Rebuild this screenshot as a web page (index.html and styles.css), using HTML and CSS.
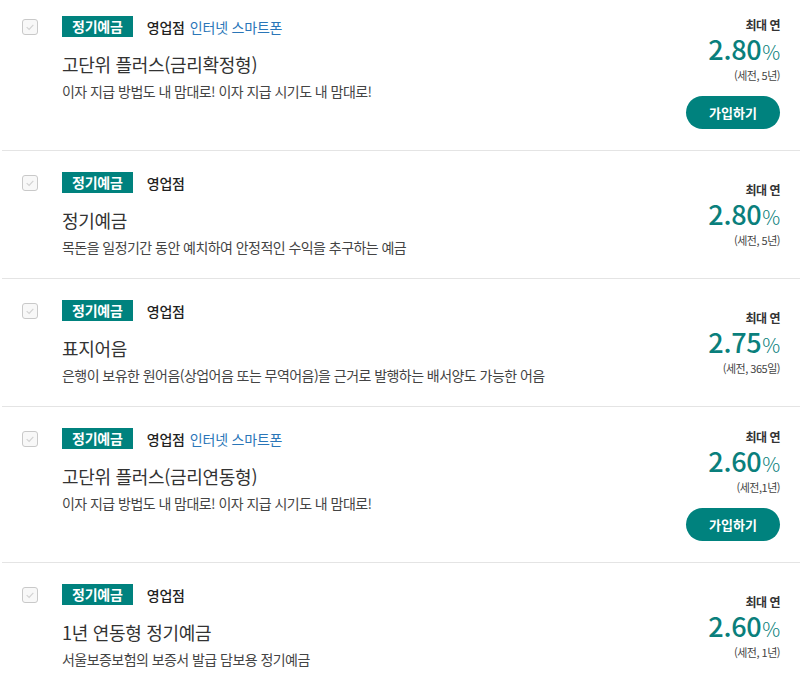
FILE: index.html
```html
<!DOCTYPE html>
<html lang="ko">
<head>
<meta charset="utf-8">
<title>예금 상품 목록</title>
<link rel="stylesheet" href="styles.css">
</head>
<body>
<ul class="list">
  <li class="row">
    <span class="check"><svg viewBox="0 0 16 16" width="16" height="16"><path d="M4.2 8.2 L7 10.8 L11.8 5.6" fill="none" stroke="#d2d2d2" stroke-width="1.3"/></svg></span>
    <div class="info">
      <div class="tags"><span class="badge">정기예금</span><span class="channel">영업점</span><span class="online">인터넷 스마트폰</span></div>
      <div class="title">고단위 플러스(금리확정형)</div>
      <div class="desc">이자 지급 방법도 내 맘대로! 이자 지급 시기도 내 맘대로!</div>
    </div>
    <div class="rate-box">
      <div class="rate-label">최대 연</div>
      <div class="rate">2.80<span class="pct">%</span></div>
      <div class="rate-note">(세전, 5년)</div>
      <button class="join">가입하기</button>
    </div>
  </li>
  <li class="row">
    <span class="check"><svg viewBox="0 0 16 16" width="16" height="16"><path d="M4.2 8.2 L7 10.8 L11.8 5.6" fill="none" stroke="#d2d2d2" stroke-width="1.3"/></svg></span>
    <div class="info">
      <div class="tags"><span class="badge">정기예금</span><span class="channel">영업점</span></div>
      <div class="title">정기예금</div>
      <div class="desc">목돈을 일정기간 동안 예치하여 안정적인 수익을 추구하는 예금</div>
    </div>
    <div class="rate-box">
      <div class="rate-label">최대 연</div>
      <div class="rate">2.80<span class="pct">%</span></div>
      <div class="rate-note">(세전, 5년)</div>
    </div>
  </li>
  <li class="row">
    <span class="check"><svg viewBox="0 0 16 16" width="16" height="16"><path d="M4.2 8.2 L7 10.8 L11.8 5.6" fill="none" stroke="#d2d2d2" stroke-width="1.3"/></svg></span>
    <div class="info">
      <div class="tags"><span class="badge">정기예금</span><span class="channel">영업점</span></div>
      <div class="title">표지어음</div>
      <div class="desc">은행이 보유한 원어음(상업어음 또는 무역어음)을 근거로 발행하는 배서양도 가능한 어음</div>
    </div>
    <div class="rate-box">
      <div class="rate-label">최대 연</div>
      <div class="rate">2.75<span class="pct">%</span></div>
      <div class="rate-note">(세전, 365일)</div>
    </div>
  </li>
  <li class="row">
    <span class="check"><svg viewBox="0 0 16 16" width="16" height="16"><path d="M4.2 8.2 L7 10.8 L11.8 5.6" fill="none" stroke="#d2d2d2" stroke-width="1.3"/></svg></span>
    <div class="info">
      <div class="tags"><span class="badge">정기예금</span><span class="channel">영업점</span><span class="online">인터넷 스마트폰</span></div>
      <div class="title">고단위 플러스(금리연동형)</div>
      <div class="desc">이자 지급 방법도 내 맘대로! 이자 지급 시기도 내 맘대로!</div>
    </div>
    <div class="rate-box">
      <div class="rate-label">최대 연</div>
      <div class="rate">2.60<span class="pct">%</span></div>
      <div class="rate-note">(세전,1년)</div>
      <button class="join">가입하기</button>
    </div>
  </li>
  <li class="row">
    <span class="check"><svg viewBox="0 0 16 16" width="16" height="16"><path d="M4.2 8.2 L7 10.8 L11.8 5.6" fill="none" stroke="#d2d2d2" stroke-width="1.3"/></svg></span>
    <div class="info">
      <div class="tags"><span class="badge">정기예금</span><span class="channel">영업점</span></div>
      <div class="title">1년 연동형 정기예금</div>
      <div class="desc">서울보증보험의 보증서 발급 담보용 정기예금</div>
    </div>
    <div class="rate-box">
      <div class="rate-label">최대 연</div>
      <div class="rate">2.60<span class="pct">%</span></div>
      <div class="rate-note">(세전, 1년)</div>
    </div>
  </li>
</ul>
</body>
</html>
```

FILE: styles.css
```css
html, body {
  margin: 0;
  padding: 0;
  background: #fff;
}
body {
  font-family: "Noto Sans CJK KR", "Noto Sans", sans-serif;
  color: #333;
  overflow: hidden;
}
.list {
  list-style: none;
  margin: 0 0 0 2px;
  padding: 0;
}
.row {
  display: flex;
  align-items: flex-start;
  padding: 21px 20px 21px 20px;
  border-bottom: 1px solid #e4e4e4;
}
.row:first-child {
  padding-top: 16px;
}
.check {
  flex: none;
  width: 14px;
  height: 14px;
  margin-top: 3px;
  border: 1px solid #c9c9c9;
  border-radius: 3px;
  background: #f8f8f8;
  display: flex;
  align-items: center;
  justify-content: center;
}
.check svg {
  display: block;
}
.info {
  flex: 1;
  margin-left: 24px;
  align-self: flex-start;
}
.tags {
  display: flex;
  align-items: center;
  height: 21px;
  font-size: 14px;
  letter-spacing: -0.2px;
}
.badge {
  background: #00827e;
  color: #fff;
  font-weight: 700;
  height: 21px;
  line-height: 21px;
  padding: 0 10px;
  margin-right: 14px;
}
.channel {
  color: #222;
  font-weight: 500;
  margin-right: 5px;
}
.online {
  color: #2a76b8;
}
.title {
  margin-top: 15px;
  font-size: 18px;
  line-height: 24px;
  letter-spacing: -0.3px;
  color: #333;
}
.desc {
  margin-top: 5px;
  font-size: 14px;
  line-height: 20px;
  letter-spacing: -0.55px;
  color: #444;
}
.rate-box {
  flex: none;
  align-self: center;
  display: flex;
  flex-direction: column;
  align-items: flex-end;
  text-align: right;
}
.rate-label {
  font-size: 12px;
  line-height: 18px;
  font-weight: 700;
  color: #333;
  letter-spacing: -0.5px;
}
.rate {
  font-size: 27px;
  line-height: 30px;
  height: 30px;
  color: #0a7f7c;
  font-weight: 500;
  letter-spacing: -0.3px;
}
.pct {
  font-size: 20px;
  line-height: 1;
  font-weight: 300;
  margin-left: 1px;
}
.rate-note {
  margin-top: 3px;
  font-size: 11px;
  line-height: 16px;
  color: #444;
  letter-spacing: -0.5px;
}
.join {
  margin-top: 13px;
  width: 94px;
  height: 33px;
  border: 0;
  border-radius: 17px;
  background: #00827e;
  color: #fff;
  font-family: "Noto Sans CJK KR", "Noto Sans", sans-serif;
  font-size: 13px;
  font-weight: 700;
  padding: 0;
  cursor: pointer;
}
```
